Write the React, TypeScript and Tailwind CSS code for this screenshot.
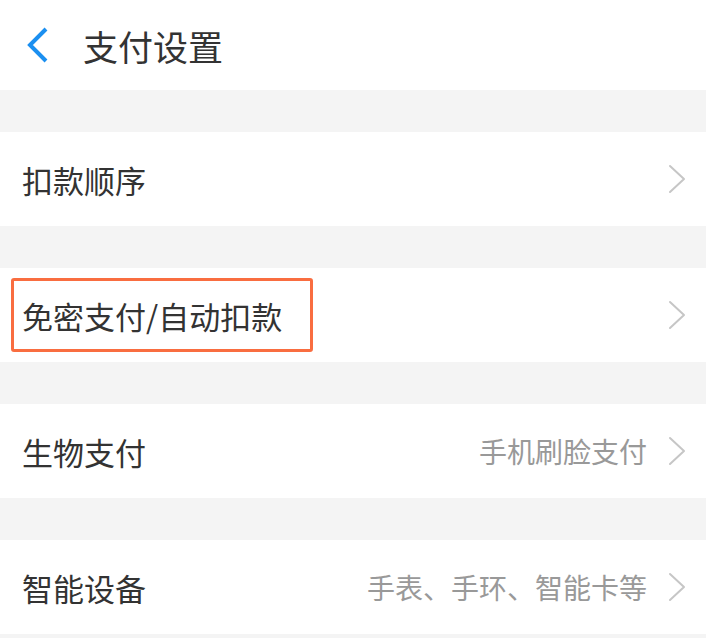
import React from "react";

const font = { fontFamily: '"Noto Sans CJK SC", "Noto Sans", sans-serif' };

function Chevron() {
  return (
    <svg width="20" height="30" viewBox="0 0 20 30" className="shrink-0">
      <path d="M3 2 L17 15 L3 28" fill="none" stroke="#c6c6c6" strokeWidth="2" strokeLinecap="round" strokeLinejoin="round" />
    </svg>
  );
}

function Row({ label, value, boxed }: { label: string; value?: string; boxed?: boolean }) {
  return (
    <div className="h-[94px] bg-white flex items-center pl-[22px] pr-[19px]">
      <div className="flex-1 flex items-center">
        {boxed ? (
          <div className="-ml-[11px] border-[3px] border-[#f96d40] rounded-[3px] h-[74px] w-[302px] flex items-center pl-[8px]">
            <span className="text-[31px] text-[#333333] leading-none">{label}</span>
          </div>
        ) : (
          <span className="text-[31px] text-[#333333] leading-none">{label}</span>
        )}
      </div>
      {value && <span className="text-[28px] text-[#999999] leading-none mr-[20px]">{value}</span>}
      <Chevron />
    </div>
  );
}

export default function App() {
  return (
    <div className="w-[706px] h-[638px] bg-[#f4f4f4] overflow-hidden" style={font}>
      <div className="h-[90px] bg-white flex items-center pl-[26px]">
        <svg width="24" height="36" viewBox="0 0 24 36" className="shrink-0">
          <path d="M20 2 L4 18 L20 34" fill="none" stroke="#1b8ff0" strokeWidth="4" strokeLinejoin="miter" />
        </svg>
        <span className="ml-[33px] text-[35px] text-[#333333] leading-none">支付设置</span>
      </div>
      <div className="h-[42px]" />
      <Row label="扣款顺序" />
      <div className="h-[42px]" />
      <Row label="免密支付/自动扣款" boxed />
      <div className="h-[42px]" />
      <Row label="生物支付" value="手机刷脸支付" />
      <div className="h-[42px]" />
      <Row label="智能设备" value="手表、手环、智能卡等" />
    </div>
  );
}
